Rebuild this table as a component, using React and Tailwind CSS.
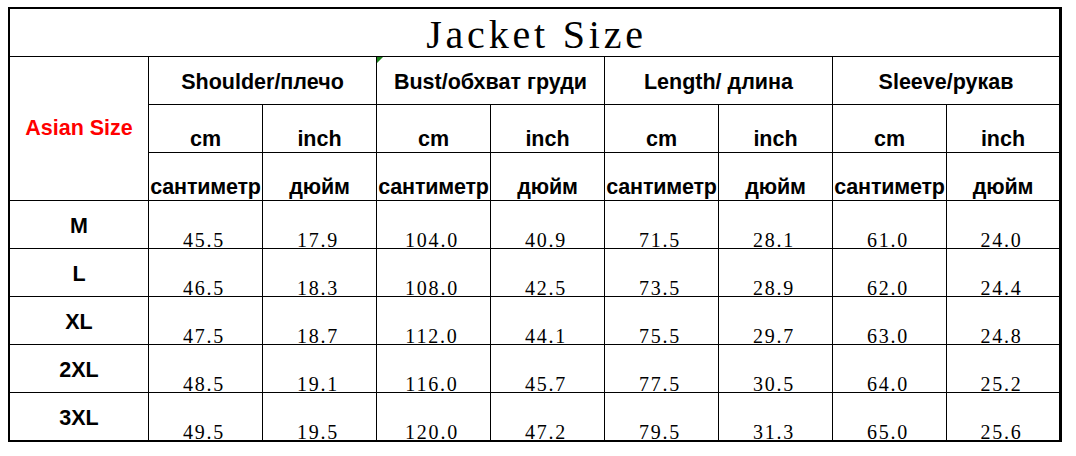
import React from "react";

const groups = ["Shoulder/плечо", "Bust/обхват груди", "Length/ длина", "Sleeve/рукав"];
const rows = [
  ["M", "45.5", "17.9", "104.0", "40.9", "71.5", "28.1", "61.0", "24.0"],
  ["L", "46.5", "18.3", "108.0", "42.5", "73.5", "28.9", "62.0", "24.4"],
  ["XL", "47.5", "18.7", "112.0", "44.1", "75.5", "29.7", "63.0", "24.8"],
  ["2XL", "48.5", "19.1", "116.0", "45.7", "77.5", "30.5", "64.0", "25.2"],
  ["3XL", "49.5", "19.5", "120.0", "47.2", "79.5", "31.3", "65.0", "25.6"],
];

const sans = "font-['Liberation_Sans',Arial,sans-serif]";
const serif = "font-['Liberation_Serif','Times_New_Roman',serif]";

export default function App() {
  return (
    <div className="bg-white w-[1076px] h-[456px] pt-[7px] pl-[8px]">
      <div className="w-fit border-t-2 border-l-2 border-r-[3px] border-b-2 border-black">
        <div className="grid grid-cols-[139px_repeat(7,114px)_112px] grid-rows-[repeat(8,48px)_47px] text-black">
          <div className="col-span-9 border-b border-black flex items-center justify-center pt-[5px] pl-[4px]">
            <span className={`${serif} text-[40px] leading-[40px] tracking-[3.8px]`}>Jacket Size</span>
          </div>

          <div className="row-span-3 border-r border-b border-black flex items-center justify-center">
            <span className={`${sans} font-bold text-[21.5px] leading-[21px] text-[#ff0000]`}>Asian Size</span>
          </div>
          {groups.map((g, i) => (
            <div
              key={g}
              className={`relative col-span-2 border-b border-black flex items-center justify-center pt-[3px] ${i < 3 ? "border-r" : ""}`}
            >
              {i === 1 && (
                <svg className="absolute left-0 top-0" width="6" height="6" viewBox="0 0 6 6">
                  <polygon points="0,0 6,0 0,6" fill="#1a7f1a" />
                </svg>
              )}
              <span className={`${sans} font-bold text-[21.5px] leading-[21px] whitespace-nowrap`}>{g}</span>
            </div>
          ))}
          {[0, 1, 2, 3, 4, 5, 6, 7].map((i) => (
            <div
              key={"u" + i}
              className={`border-b border-black flex items-end justify-center pb-[2px] ${i < 7 ? "border-r" : ""}`}
            >
              <span className={`${sans} font-bold text-[21.5px] leading-[21px]`}>{i % 2 === 0 ? "cm" : "inch"}</span>
            </div>
          ))}
          {[0, 1, 2, 3, 4, 5, 6, 7].map((i) => (
            <div
              key={"r" + i}
              className={`border-b border-black flex items-end justify-center pb-[2px] ${i < 7 ? "border-r" : ""}`}
            >
              <span className={`${sans} font-bold text-[21.5px] leading-[21px] whitespace-nowrap tracking-[-0.2px]`}>
                {i % 2 === 0 ? "сантиметр" : "дюйм"}
              </span>
            </div>
          ))}

          {rows.map((r, ri) =>
            r.map((v, ci) => {
              const last = ri === rows.length - 1;
              const cls = `${last ? "" : "border-b"} ${ci < 8 ? "border-r" : ""} border-black flex justify-center`;
              if (ci === 0)
                return (
                  <div key={ri + "-" + ci} className={`${cls} items-center pt-[3px]`}>
                    <span className={`${sans} font-bold text-[21.5px] leading-[21px]`}>{v}</span>
                  </div>
                );
              return (
                <div key={ri + "-" + ci} className={`${cls} items-end pr-[3px]`}>
                  <span className={`${serif} text-[20px] leading-[16px] tracking-[1.8px]`}>{v}</span>
                </div>
              );
            })
          )}
        </div>
      </div>
    </div>
  );
}
